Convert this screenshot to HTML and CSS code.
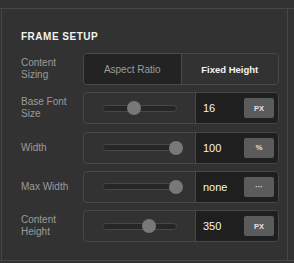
FILE: index.html
```html
<!DOCTYPE html>
<html>
<head>
    <title>Frame Setup</title>
    <link rel="stylesheet" href="styles.css">
</head>
<body>
    <div class="frame">
        <div class="panel">
            <div class="panel-title">Frame Setup</div>

            <div class="rows">
                <div class="row">
                    <div class="label">Content<br>Sizing</div>
                    <div class="segmented">
                        <div class="seg">Aspect Ratio</div>
                        <div class="seg active">Fixed Height</div>
                    </div>
                </div>

                <div class="row">
                    <div class="label">Base Font<br>Size</div>
                    <div class="control">
                        <div class="slider-wrap">
                            <div class="track"><div class="thumb" style="left: 43%"></div></div>
                        </div>
                        <div class="value">
                            <span>16</span>
                            <button class="unit">PX</button>
                        </div>
                    </div>
                </div>

                <div class="row">
                    <div class="label">Width</div>
                    <div class="control">
                        <div class="slider-wrap">
                            <div class="track"><div class="thumb" style="left: 100%"></div></div>
                        </div>
                        <div class="value">
                            <span>100</span>
                            <button class="unit">%</button>
                        </div>
                    </div>
                </div>

                <div class="row">
                    <div class="label">Max Width</div>
                    <div class="control">
                        <div class="slider-wrap">
                            <div class="track"><div class="thumb" style="left: 100%"></div></div>
                        </div>
                        <div class="value">
                            <span>none</span>
                            <button class="unit">···</button>
                        </div>
                    </div>
                </div>

                <div class="row">
                    <div class="label">Content<br>Height</div>
                    <div class="control">
                        <div class="slider-wrap">
                            <div class="track"><div class="thumb" style="left: 63%"></div></div>
                        </div>
                        <div class="value">
                            <span>350</span>
                            <button class="unit">PX</button>
                        </div>
                    </div>
                </div>
            </div>
        </div>
    </div>
</body>
</html>
```

FILE: styles.css
```css
body {
    margin: 0;
    background-color: #323232;
    font-family: "Liberation Sans", Arial, sans-serif;
    width: 294px;
    height: 263px;
    overflow: hidden;
}

.frame {
    margin-top: 8px;
    border-top: 1px solid #474747;
    border-bottom: 1px solid #474747;
}

.panel {
    margin-left: 1px;
    width: 287px;
    height: 251px;
    box-sizing: border-box;
    border-left: 1px solid #474747;
    border-right: 1px solid #474747;
    padding: 22px 0 0 19px;
}

.panel-title {
    font-size: 10px;
    line-height: 12px;
    font-weight: bold;
    letter-spacing: 0.5px;
    text-transform: uppercase;
    color: #f2f2f2;
    margin-bottom: 10px;
}

.rows {
    display: flex;
    flex-direction: column;
    gap: 7.3px;
}

.row {
    display: grid;
    grid-template-columns: 62px 196px;
    align-items: center;
}

.label {
    font-size: 10px;
    line-height: 12px;
    color: #9b9b9b;
}

.segmented {
    display: flex;
    height: 32px;
    box-sizing: border-box;
    border: 1px solid #4a4a4a;
    border-radius: 4px;
    overflow: hidden;
}

.seg {
    flex: 1;
    display: flex;
    align-items: center;
    justify-content: center;
    font-size: 10px;
    color: #9b9b9b;
    background-color: #232323;
}

.seg.active {
    background-color: #323232;
    color: #f4f4f4;
    font-size: 9.5px;
    font-weight: bold;
    border-left: 1px solid #4a4a4a;
}

.control {
    display: flex;
    height: 32px;
    box-sizing: border-box;
    border: 1px solid #484848;
    border-radius: 4px;
    overflow: hidden;
}

.slider-wrap {
    width: 112px;
    display: flex;
    align-items: center;
    padding-left: 18px;
    box-sizing: border-box;
    border-right: 1px solid #484848;
}

.track {
    position: relative;
    width: 75px;
    height: 7px;
    box-sizing: border-box;
    background-color: #262626;
    border: 1px solid #474747;
    border-radius: 4px;
}

.thumb {
    position: absolute;
    top: 50%;
    width: 14px;
    height: 14px;
    margin-left: -7px;
    margin-top: -7px;
    border-radius: 50%;
    background-color: #787878;
}

.value {
    flex: 1;
    display: flex;
    align-items: center;
    justify-content: space-between;
    background-color: #1f1f1f;
    padding: 0 4px 0 7px;
    font-size: 11px;
    color: #f4f4f4;
}

.unit {
    width: 30px;
    height: 20px;
    border: none;
    border-radius: 2px;
    padding: 0;
    background-color: #5b5b5b;
    color: #e2e2e2;
    font-family: "Liberation Sans", Arial, sans-serif;
    font-size: 7.5px;
    font-weight: bold;
}
```
